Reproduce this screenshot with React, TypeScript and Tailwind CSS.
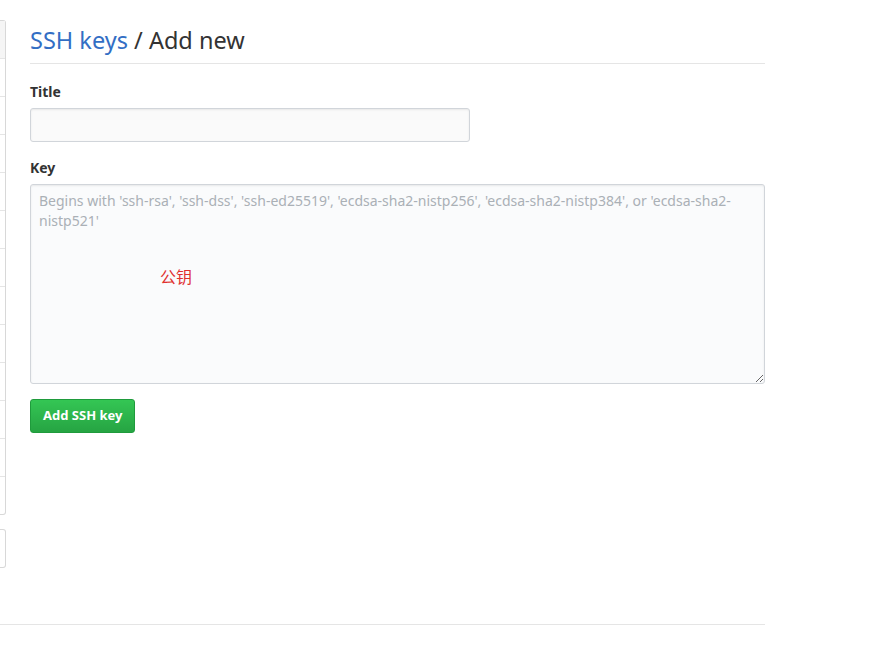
export default function App() {
  const rows = Array.from({ length: 12 });

  return (
    <div className="min-h-[648px] bg-white font-['Noto_Sans','Liberation_Sans',sans-serif] text-[#333]">
      <div className="flex pt-5">
        {/* settings menu, almost entirely scrolled off to the left */}
        <div className="w-[6px] shrink-0">
          <div className="rounded-r-[3px] border border-l-0 border-[#d8d8d8]">
            <div className="h-[38px] border-b border-[#e5e5e5] bg-[#f5f5f5]" />
            {rows.map((_, i) => (
              <div
                key={i}
                className={i < rows.length - 1 ? "h-[38px] border-b border-[#e5e5e5]" : "h-[37px]"}
              />
            ))}
          </div>
          <div className="mt-[14px] h-[39px] rounded-r-[3px] border border-l-0 border-[#d8d8d8]" />
        </div>

        <main className="ml-[24px] w-[735px] pt-[5px]">
          <h2 className="border-b border-[#e5e5e5] pb-2 text-[23.5px] leading-[30px] font-normal">
            <a href="#" className="text-[#336ec4]">
              SSH keys
            </a>{" "}
            / Add new
          </h2>

          <form className="mt-[18px]">
            <label className="block text-[14px] leading-5 font-bold">Title</label>
            <input
              type="text"
              className="mt-[6px] block h-[34px] w-[440px] rounded-[3px] border border-[#d1d5da] bg-[#fafafa] px-2 text-[14px] shadow-[inset_0_1px_2px_rgba(0,0,0,0.075)] outline-none"
            />

            <label className="mt-4 block text-[14px] leading-5 font-bold">Key</label>
            <div className="relative mt-[6px]">
              <textarea
                className="block h-[200px] w-full rounded-[3px] border border-[#d1d5da] bg-[#fafbfc] px-2 py-[6px] text-[14px] leading-5 shadow-[inset_0_1px_2px_rgba(0,0,0,0.075)] outline-none placeholder:text-[#aab0b6]"
                placeholder="Begins with 'ssh-rsa', 'ssh-dss', 'ssh-ed25519', 'ecdsa-sha2-nistp256', 'ecdsa-sha2-nistp384', or 'ecdsa-sha2-nistp521'"
              />
              <span className="pointer-events-none absolute top-[82px] left-[130px] font-['Noto_Sans_CJK_SC',sans-serif] text-[16px] leading-5 text-[#e0312f]">
                公钥
              </span>
            </div>

            <button
              type="button"
              className="mt-[15px] h-[34px] rounded-[3px] border border-[#1f9b3c] bg-gradient-to-b from-[#34c654] to-[#26a443] px-3 text-[13px] font-bold text-white"
            >
              Add SSH key
            </button>
          </form>
        </main>
      </div>

      <footer className="mt-[56px] w-[765px] border-t border-[#e5e5e5]" />
    </div>
  );
}
